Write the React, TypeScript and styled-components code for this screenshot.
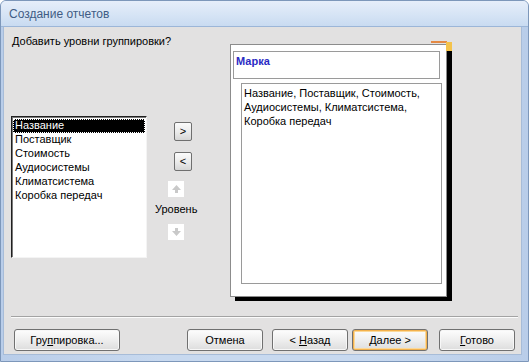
import React from "react";
import styled, { createGlobalStyle } from "styled-components";

const Global = createGlobalStyle`
  html, body { margin: 0; padding: 0; background: #ffffff; }
  body { font-family: "Liberation Sans", Arial, sans-serif; font-size: 11px; }
  * { box-sizing: border-box; }
`;

const Window = styled.div`
  width: 529px;
  height: 362px;
  display: flex;
  flex-direction: column;
  background: #c6d8ef;
  border: 1px solid #7d97ba;
  border-radius: 6px 6px 0 0;
  overflow: hidden;
`;

const TitleBar = styled.div`
  height: 26px;
  flex: none;
  display: flex;
  align-items: center;
  padding: 1px 0 0 8px;
  background: linear-gradient(#e6eefa, #d6e4f5 55%, #c9dbf1);
  border-bottom: 1px solid #9cb6d8;
  color: #3f5c84;
  font-family: "Liberation Sans", Arial, sans-serif;
  font-size: 12px;
`;

const Frame = styled.div`
  flex: 1;
  display: flex;
  padding: 0 6px 6px 2px;
  background: linear-gradient(90deg, #b9cde9, #c8d9ef 30%, #c8d9ef 70%, #b9cde9);
`;

const Body = styled.div`
  flex: 1;
  display: flex;
  flex-direction: column;
  background: #e2e1e1;
  border: 1px solid #a7bcd8;
  border-top: none;
`;

const Main = styled.div`
  height: 289px;
  flex: none;
  display: flex;
  padding-left: 7px;
`;

const LeftCol = styled.div`
  width: 219px;
  display: flex;
  flex-direction: column;
`;

const Question = styled.div`
  margin-top: 8px;
  padding-left: 1px;
  height: 13px;
  line-height: 13px;
  color: #000;
`;

const ListRow = styled.div`
  margin-top: 68px;
  display: flex;
`;

const ListBox = styled.div`
  width: 136px;
  height: 142px;
  background: #fff;
  border-style: solid;
  border-width: 1px;
  border-color: #202020 #f4f4f4 #f4f4f4 #202020;
  box-shadow: inset 1px 1px 0 #7a7a7a;
  padding: 2px 1px;
`;

const ListItem = styled.div<{ $selected?: boolean }>`
  height: 14px;
  line-height: 13px;
  padding-left: 2px;
  white-space: nowrap;
  color: ${(p) => (p.$selected ? "#fff" : "#000")};
  background: ${(p) => (p.$selected ? "#000" : "transparent")};
  outline: ${(p) => (p.$selected ? "1px dotted #fff" : "none")};
  outline-offset: -1px;
`;

const Controls = styled.div`
  margin-left: 8px;
  width: 44px;
  padding-top: 6px;
  display: flex;
  flex-direction: column;
  align-items: flex-start;
`;

const MoveButton = styled.button<{ $gap?: number }>`
  margin-left: 19px;
  margin-top: ${(p) => p.$gap ?? 0}px;
  width: 18px;
  height: 19px;
  padding: 0;
  border: 1px solid #6f6f6f;
  border-radius: 2px;
  background: linear-gradient(#fbfbfb, #ececec 50%, #d6d6d6);
  font-family: "Liberation Sans", Arial, sans-serif;
  font-size: 11px;
  color: #000;
  line-height: 15px;
`;

const LevelButton = styled.div<{ $gap: number }>`
  margin-left: 13px;
  margin-top: ${(p) => p.$gap}px;
  width: 16px;
  height: 16px;
  background: #fff;
  display: flex;
  align-items: center;
  justify-content: center;
`;

const LevelLabel = styled.div`
  margin-top: 6px;
  height: 13px;
  line-height: 13px;
  color: #000;
`;

const PreviewCol = styled.div`
  padding-top: 17px;
`;

const Preview = styled.div`
  position: relative;
  width: 217px;
  height: 253px;
  background: #fff;
  border: 1px solid #8c8c8c;
  box-shadow: 5px 4px 0 #000;
  padding: 6px 0 0 2px;
  display: flex;
  flex-direction: column;
`;

const Corner = styled.svg`
  position: absolute;
  top: -4px;
  right: -7px;
`;

const GroupBox = styled.div`
  width: 207px;
  height: 28px;
  border: 1px solid #9a9a9a;
  padding: 3px 0 0 2px;
  color: #2b2bc4;
  font-weight: bold;
  font-size: 11px;
  line-height: 13px;
`;

const FieldsBox = styled.div`
  margin: 4px 0 0 8px;
  width: 201px;
  height: 201px;
  border: 1px solid #9a9a9a;
  padding: 2px 0 0 2px;
  color: #000;
  line-height: 14px;
`;

const Separator = styled.div`
  margin: 0 3px 0 7px;
  height: 2px;
  border-top: 1px solid #a3a3a3;
  border-bottom: 1px solid #fbfbfb;
`;

const Footer = styled.div`
  flex: 1;
  display: flex;
  align-items: flex-start;
  justify-content: space-between;
  padding: 11px 6px 0 10px;
`;

const RightButtons = styled.div`
  display: flex;
`;

const Button = styled.button<{ $w?: number; $gap?: number; $default?: boolean }>`
  width: ${(p) => p.$w ?? 76}px;
  height: 22px;
  margin-left: ${(p) => p.$gap ?? 0}px;
  padding: 0;
  border: 1px solid #707070;
  border-radius: 3px;
  background: linear-gradient(#fdfdfd, #f0f0f0 45%, #dddddd);
  box-shadow: ${(p) =>
    p.$default ? "inset 0 0 0 1px #f3b14d, inset 0 0 0 2px #fbd99a" : "inset 0 0 0 1px #f7f7f7"};
  font-family: "Liberation Sans", Arial, sans-serif;
  font-size: 11px;
  color: #000;
  line-height: 18px;
  & u { text-decoration: underline; text-underline-offset: 1px; }
`;

const ArrowIcon = ({ down }: { down?: boolean }) => (
  <svg width="9" height="8" viewBox="0 0 9 8">
    <path
      d={down ? "M3 0h3v3h3L4.5 8 0 3h3z" : "M4.5 0 9 5H6v3H3V5H0z"}
      fill="#c9c9c9"
    />
  </svg>
);

const items = [
  "Название",
  "Поставщик",
  "Стоимость",
  "Аудиосистемы",
  "Климатсистема",
  "Коробка передач",
];

export default function App() {
  return (
    <>
      <Global />
      <Window>
        <TitleBar>Создание отчетов</TitleBar>
        <Frame>
          <Body>
            <Main>
              <LeftCol>
                <Question>Добавить уровни группировки?</Question>
                <ListRow>
                  <ListBox>
                    {items.map((it, i) => (
                      <ListItem key={it} $selected={i === 0}>
                        {it}
                      </ListItem>
                    ))}
                  </ListBox>
                  <Controls>
                    <MoveButton>&gt;</MoveButton>
                    <MoveButton $gap={11}>&lt;</MoveButton>
                    <LevelButton $gap={10}>
                      <ArrowIcon />
                    </LevelButton>
                    <LevelLabel>Уровень</LevelLabel>
                    <LevelButton $gap={8}>
                      <ArrowIcon down />
                    </LevelButton>
                  </Controls>
                </ListRow>
              </LeftCol>
              <PreviewCol>
                <Preview>
                  <Corner width="22" height="10" viewBox="0 0 22 10">
                    <rect x="0" y="0" width="16" height="2" fill="#e58a45" />
                    <rect x="15" y="1" width="6" height="9" fill="#f4c34c" />
                  </Corner>
                  <GroupBox>Марка</GroupBox>
                  <FieldsBox>
                    Название, Поставщик, Стоимость,
                    <br />
                    Аудиосистемы, Климатсистема,
                    <br />
                    Коробка передач
                  </FieldsBox>
                </Preview>
              </PreviewCol>
            </Main>
            <Separator />
            <Footer>
              <Button $w={106}>
                Гру<u>п</u>пировка...
              </Button>
              <RightButtons>
                <Button>Отмена</Button>
                <Button $gap={9}>
                  &lt; <u>Н</u>азад
                </Button>
                <Button $gap={4} $default>
                  <u>Д</u>алее &gt;
                </Button>
                <Button $gap={11}>
                  <u>Г</u>отово
                </Button>
              </RightButtons>
            </Footer>
          </Body>
        </Frame>
      </Window>
    </>
  );
}
